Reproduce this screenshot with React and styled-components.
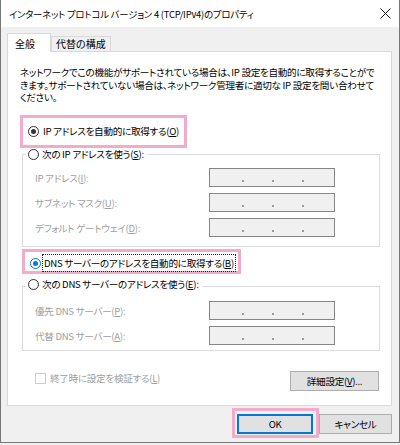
import React from 'react';
import styled, { createGlobalStyle } from 'styled-components';

const GlobalStyle = createGlobalStyle`
  body {
    margin: 0;
    background: #f0f0f0;
    font-family: 'Noto Sans CJK JP', 'Noto Sans', sans-serif;
    font-size: 9.6px;
    letter-spacing: -0.3px;
    font-feature-settings: "palt";
    color: #000;
  }
  * { box-sizing: border-box; }
`;

const Window = styled.div`
  width: 400px;
  background: #f0f0f0;
  border: 1px solid #767676;
  border-top: none;
`;

const TitleBar = styled.div`
  height: 27px;
  background: #fff;
  display: flex;
  align-items: center;
  justify-content: space-between;
  padding: 0 8px 0 8px;
  font-size: 9.4px;
  letter-spacing: -0.2px;
  white-space: nowrap;
`;

const Body = styled.div`
  padding: 6px 7px 4px 6px;
`;

const TabRow = styled.div`
  display: flex;
  align-items: flex-end;
  height: 18px;
`;

const Tab = styled.div`
  position: relative;
  z-index: 1;
  width: ${p => p.$width}px;
  height: ${p => (p.$active ? 19 : 15)}px;
  margin-bottom: ${p => (p.$active ? -1 : 0)}px;
  background: ${p => (p.$active ? '#fff' : '#f0f0f0')};
  border: 1px solid #d9d9d9;
  border-bottom: none;
  padding: ${p => (p.$active ? '2px 0 0 7px' : '0 0 0 4px')};
  line-height: ${p => (p.$active ? 15 : 14)}px;
  font-size: 10px;
  letter-spacing: 0;
  white-space: nowrap;
`;

const Panel = styled.div`
  background: #fff;
  border: 1px solid #d9d9d9;
  padding: 14px 11px 14px 12px;
`;

const Description = styled.p`
  margin: 0;
  line-height: 12.5px;
  white-space: nowrap;
`;

const Highlight = styled.div`
  position: relative;
  z-index: 2;
  width: ${p => p.$width}px;
  margin: ${p => p.$margin};
  border: 3px solid #f2abcb;
  padding: ${p => p.$pad};
`;

const RadioRow = styled.div`
  display: flex;
  align-items: center;
  gap: ${p => p.$gap ?? 3}px;
  height: ${p => p.$height ?? 14}px;
  white-space: nowrap;
`;

const Radio = styled.span`
  width: 11px;
  height: 11px;
  border-radius: 50%;
  border: 1px solid ${p => (p.$blue ? '#0078d7' : '#333')};
  background: #fff;
  display: flex;
  align-items: center;
  justify-content: center;
  flex-shrink: 0;

  &::after {
    content: '';
    width: 5px;
    height: 5px;
    border-radius: 50%;
    background: ${p => (p.$blue ? '#0078d7' : '#333')};
    display: ${p => (p.$checked ? 'block' : 'none')};
  }
`;

const FocusLabel = styled.span`
  outline: 1px dotted #222;
  padding: 0 1px;
  line-height: 16px;
`;

const Group = styled.div`
  margin: ${p => p.$top}px 0 0 2px;
  border: 1px solid #dcdcdc;
  padding: 0 0 ${p => p.$bottom}px 12px;
`;

const Legend = styled.div`
  display: flex;
  width: fit-content;
  background: #fff;
  margin: ${p => p.$shift}px 0 ${p => p.$after}px -9px;
  padding: 0 3px 0 2px;
`;

const FieldGrid = styled.div`
  display: grid;
  grid-template-columns: 174px 126px;
  grid-auto-rows: 19px;
  row-gap: 6px;
  align-items: center;
`;

const FieldLabel = styled.span`
  color: #a0a0a0;
  white-space: nowrap;
`;

const IpField = styled.div`
  height: 19px;
  background: #f0f0f0;
  border: 1px solid #868686;
  display: flex;
  align-items: center;
  gap: 26px;
  padding-left: 31px;
`;

const Dot = styled.span`
  width: 4px;
  height: 2px;
  display: flex;
  justify-content: center;

  &::after {
    content: '';
    width: 2px;
    height: 2px;
    background: #9a9a9a;
    margin-top: 3px;
  }
`;

const Footer = styled.div`
  display: flex;
  justify-content: space-between;
  align-items: flex-start;
  margin: 20px 1px 0 15px;
`;

const CheckRow = styled.div`
  display: flex;
  align-items: center;
  gap: 4px;
  height: 14px;
  color: #a0a0a0;
`;

const CheckBox = styled.span`
  width: 11px;
  height: 11px;
  border: 1px solid #cccccc;
  background: #fff;
`;

const Button = styled.div`
  width: ${p => p.$width}px;
  height: 20px;
  margin-top: ${p => p.$top ?? 0}px;
  background: #e1e1e1;
  border: 1px solid ${p => (p.$default ? '#0078d7' : '#adadad')};
  box-shadow: ${p => (p.$default ? 'inset 0 0 0 1px #0078d7' : 'none')};
  display: flex;
  align-items: center;
  justify-content: center;
  white-space: nowrap;
`;

const ButtonRow = styled.div`
  display: flex;
  justify-content: flex-end;
  align-items: flex-start;
  margin-top: 2px;
`;

const CloseIcon = () => (
  <svg width="11" height="11" viewBox="0 0 11 11">
    <path d="M0.5 0.5 L10.5 10.5 M10.5 0.5 L0.5 10.5" stroke="#111" strokeWidth="1" />
  </svg>
);

const IpBox = () => (
  <IpField>
    <Dot />
    <Dot />
    <Dot />
  </IpField>
);

const App = () => (
  <>
    <GlobalStyle />
    <Window>
      <TitleBar>
        <span>インターネット プロトコル バージョン 4 (TCP/IPv4)のプロパティ</span>
        <CloseIcon />
      </TitleBar>
      <Body>
        <TabRow>
          <Tab $active $width={44}>全般</Tab>
          <Tab $width={60}>代替の構成</Tab>
        </TabRow>
        <Panel>
          <Description>
            ネットワークでこの機能がサポートされている場合は、IP 設定を自動的に取得することがで<br />
            きます。サポートされていない場合は、ネットワーク管理者に適切な IP 設定を問い合わせて<br />
            ください。
          </Description>

          <Highlight $width={167} $margin="11.5px 0 0 0" $pad="6px 0 7px 5px">
            <RadioRow $gap={4}>
              <Radio $checked />
              <span>IP アドレスを自動的に取得する(<u>O</u>)</span>
            </RadioRow>
          </Highlight>

          <Group $top={6} $bottom={9}>
            <Legend $shift={-8} $after={7}>
              <RadioRow>
                <Radio />
                <span>次の IP アドレスを使う(<u>S</u>):</span>
              </RadioRow>
            </Legend>
            <FieldGrid>
              <FieldLabel>IP アドレス(<u>I</u>):</FieldLabel>
              <IpBox />
              <FieldLabel>サブネット マスク(<u>U</u>):</FieldLabel>
              <IpBox />
              <FieldLabel>デフォルト ゲートウェイ(<u>D</u>):</FieldLabel>
              <IpBox />
            </FieldGrid>
          </Group>

          <Highlight $width={219} $margin="2px 0 0 2px" $pad="3px 0 0 5px">
            <RadioRow $gap={2} $height={16}>
              <Radio $checked $blue />
              <FocusLabel>DNS サーバーのアドレスを自動的に取得する(<u>B</u>)</FocusLabel>
            </RadioRow>
          </Highlight>

          <Group $top={12} $bottom={5}>
            <Legend $shift={-10} $after={10}>
              <RadioRow>
                <Radio />
                <span>次の DNS サーバーのアドレスを使う(<u>E</u>):</span>
              </RadioRow>
            </Legend>
            <FieldGrid>
              <FieldLabel>優先 DNS サーバー(<u>P</u>):</FieldLabel>
              <IpBox />
              <FieldLabel>代替 DNS サーバー(<u>A</u>):</FieldLabel>
              <IpBox />
            </FieldGrid>
          </Group>

          <Footer>
            <CheckRow>
              <CheckBox />
              <span>終了時に設定を検証する(<u>L</u>)</span>
            </CheckRow>
            <Button $width={89}>詳細設定(<u>V</u>)...</Button>
          </Footer>
        </Panel>

        <ButtonRow>
          <Highlight $width={87} $margin="0" $pad="3px 3px 1px 2px">
            <Button $default $width={76}>OK</Button>
          </Highlight>
          <Button $width={73} $top={6}>キャンセル</Button>
        </ButtonRow>
      </Body>
    </Window>
  </>
);

export default App;
